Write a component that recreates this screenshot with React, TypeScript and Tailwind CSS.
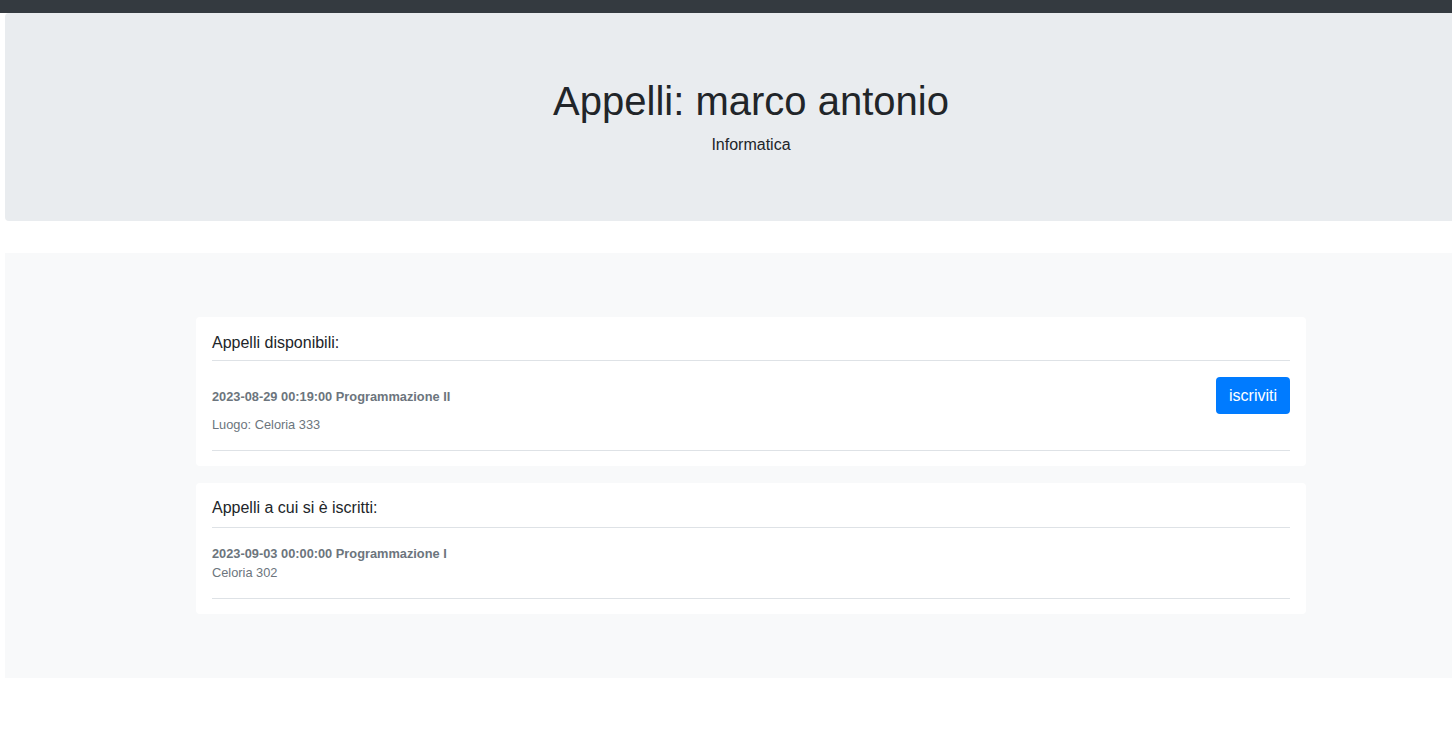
export default function App() {
  return (
    <div className="min-h-screen w-[1452px] overflow-hidden bg-white text-[#212529] font-['Liberation_Sans',Arial,sans-serif]">
      {/* top navbar strip */}
      <div className="h-[13px] bg-[#343a40]" />

      {/* jumbotron */}
      <div className="ml-[5px] w-[1492px] h-[208px] rounded-[4px] bg-[#e9ecef] pt-16 text-center">
        <h1 className="text-[40px] leading-[48px] font-normal">Appelli: marco antonio</h1>
        <p className="mt-[8px] text-base leading-6">Informatica</p>
      </div>

      {/* content */}
      <div className="mt-[32px] ml-[5px] w-[1492px] bg-[#f8f9fa] py-16">
        <div className="mx-auto w-[1110px] flex flex-col gap-[17px]">
          <div className="bg-white rounded-[4px] px-4 pt-[14px] pb-[15px]">
            <h5 className="text-base leading-6 pb-[5px] border-b border-[#dee2e6]">Appelli disponibili:</h5>
            <div className="flex items-start justify-between pt-4 pb-[15px] border-b border-[#dee2e6]">
              <div className="pt-[10px] text-[12.8px] text-[#6c757d]">
                <p className="leading-5 font-bold">2023-08-29 00:19:00 Programmazione II</p>
                <p className="mt-2 leading-5">Luogo: Celoria 333</p>
              </div>
              <button className="h-[37px] px-[13px] rounded-[4px] bg-[#007bff] text-white text-base leading-6">iscriviti</button>
            </div>
          </div>

          <div className="bg-white rounded-[4px] px-4 pt-[13px] pb-[15px]">
            <h5 className="text-base leading-6 pb-[7px] border-b border-[#dee2e6]">Appelli a cui si è iscritti:</h5>
            <div className="pt-4 pb-4 border-b border-[#dee2e6] text-[12.8px] text-[#6c757d]">
              <p className="leading-5 font-bold">2023-09-03 00:00:00 Programmazione I</p>
              <p className="leading-[18px]">Celoria 302</p>
            </div>
          </div>
        </div>
      </div>
    </div>
  );
}
